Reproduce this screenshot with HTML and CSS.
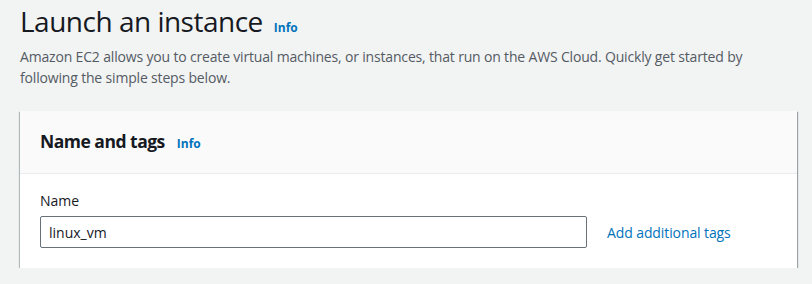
FILE: index.html
```html
<!DOCTYPE html>
<html lang="en">
<head>
    <meta charset="UTF-8">
    <meta name="viewport" content="width=device-width, initial-scale=1.0">
    <title>Launch an instance</title>
    <link rel="stylesheet" href="styles.css">
</head>
<body>
    <div class="page">
        <div class="page-header">
            <h1>Launch an instance <a class="info-link" href="#">Info</a></h1>
            <p class="description">Amazon EC2 allows you to create virtual machines, or instances, that run on the AWS Cloud. Quickly get started by following the simple steps below.</p>
        </div>

        <!-- Name and tags -->
        <div class="panel">
            <div class="panel-header">
                <h2>Name and tags <a class="info-link" href="#">Info</a></h2>
            </div>
            <div class="panel-body">
                <label for="instanceName">Name</label>
                <div class="name-row">
                    <input type="text" id="instanceName" value="linux_vm">
                    <a class="tags-link" href="#">Add additional tags</a>
                </div>
            </div>
        </div>
    </div>
</body>
</html>
```

FILE: styles.css
```css
body {
    margin: 0;
    background-color: #f2f3f3;
    font-family: "Open Sans", Arial, sans-serif;
    color: #16191f;
}
.page {
    padding: 0 15px 0 20px;
}
.page-header {
    padding-top: 2px;
}
h1 {
    margin: 0;
    font-size: 28px;
    font-weight: 400;
    line-height: 38px;
    letter-spacing: -0.5px;
    display: flex;
    align-items: baseline;
    gap: 11px;
}
.info-link {
    color: #0073bb;
    font-size: 12px;
    font-weight: bold;
    line-height: 16px;
    letter-spacing: 0;
    text-decoration: none;
}
.description {
    margin: 6px 0 0;
    font-size: 14px;
    line-height: 21px;
    letter-spacing: -0.17px;
    color: #545b64;
    max-width: 760px;
}
.panel {
    margin-top: 23px;
    background-color: #fff;
    box-shadow: 0 1px 1px 0 rgba(0, 28, 36, 0.5), 1px 1px 1px 0 rgba(0, 28, 36, 0.3), -1px 1px 1px 0 rgba(0, 28, 36, 0.2);
}
.panel-header {
    background-color: #fafafa;
    border-bottom: 1px solid #eaeded;
    padding: 17px 20px 18px;
}
h2 {
    margin: 0;
    font-size: 17.5px;
    font-weight: bold;
    line-height: 27px;
    letter-spacing: -0.5px;
    display: flex;
    align-items: baseline;
    gap: 12px;
}
.panel-body {
    padding: 16px 20px 20px;
}
label {
    display: block;
    font-size: 14px;
    line-height: 22px;
    color: #16191f;
    margin-bottom: 4px;
}
.name-row {
    display: flex;
    align-items: center;
    gap: 20px;
}
input[type="text"] {
    width: 547px;
    height: 32px;
    box-sizing: border-box;
    padding: 4px 8px;
    border: 1px solid #687078;
    border-radius: 2px;
    font-family: inherit;
    font-size: 14px;
    color: #16191f;
}
.tags-link {
    color: #0073bb;
    font-size: 14px;
    letter-spacing: -0.1px;
    text-decoration: none;
}
```
